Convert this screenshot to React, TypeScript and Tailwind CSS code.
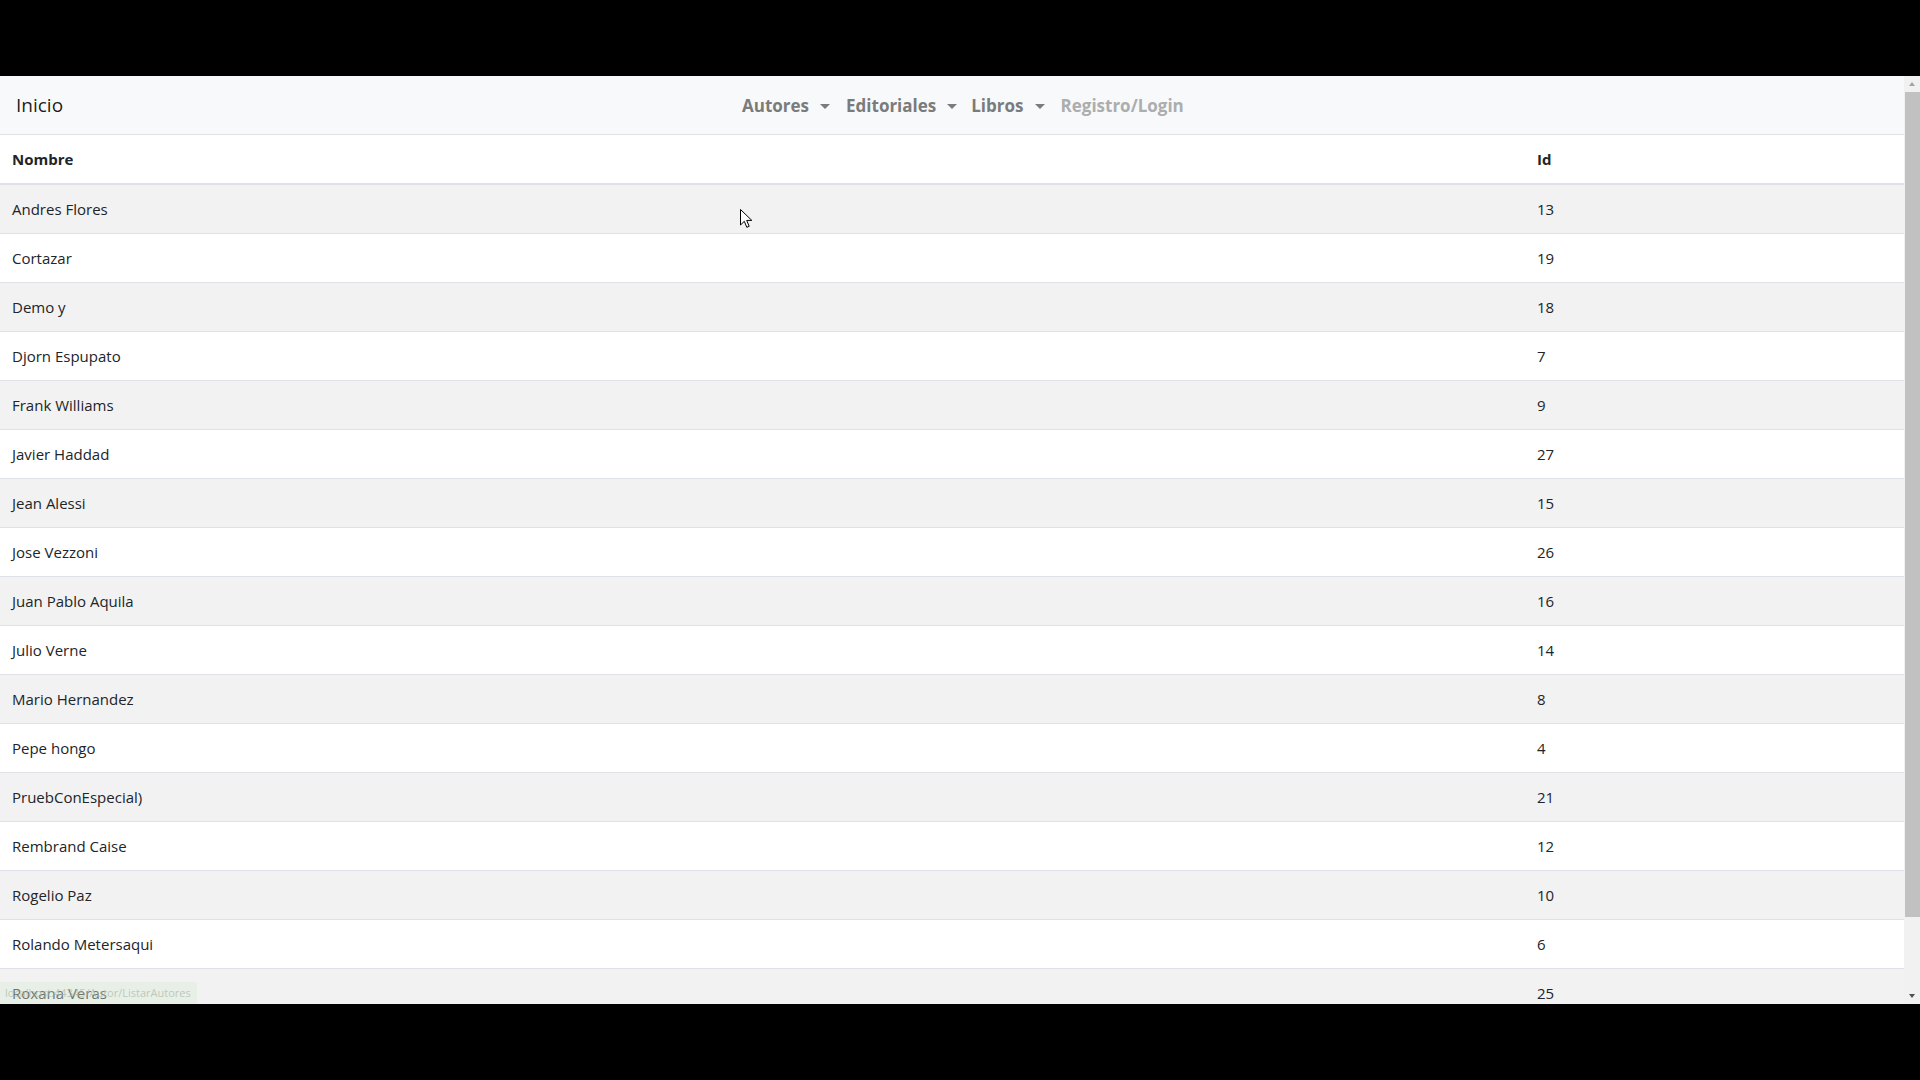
import React from 'react';

const autores = [
  { nombre: 'Andres Flores', id: 13 },
  { nombre: 'Cortazar', id: 19 },
  { nombre: 'Demo y', id: 18 },
  { nombre: 'Djorn Espupato', id: 7 },
  { nombre: 'Frank Williams', id: 9 },
  { nombre: 'Javier Haddad', id: 27 },
  { nombre: 'Jean Alessi', id: 15 },
  { nombre: 'Jose Vezzoni', id: 26 },
  { nombre: 'Juan Pablo Aquila', id: 16 },
  { nombre: 'Julio Verne', id: 14 },
  { nombre: 'Mario Hernandez', id: 8 },
  { nombre: 'Pepe hongo', id: 4 },
  { nombre: 'PruebConEspecial)', id: 21 },
  { nombre: 'Rembrand Caise', id: 12 },
  { nombre: 'Rogelio Paz', id: 10 },
  { nombre: 'Rolando Metersaqui', id: 6 },
  { nombre: 'Roxana Veras', id: 25 },
];

function Caret() {
  return (
    <span className="ml-[11px] inline-block w-0 h-0 border-l-[5px] border-r-[5px] border-t-[5px] border-l-transparent border-r-transparent border-t-current translate-y-[1px]" />
  );
}

function NavDropdown({ label, className }: { label: string; className?: string }) {
  return (
    <a className={`flex items-center text-[#7a7b7c] ${className ?? ''}`}>
      <span>{label}</span>
      <Caret />
    </a>
  );
}

function Scrollbar() {
  return (
    <div className="w-[16px] h-full bg-[#f1f1f1] flex flex-col">
      <div className="h-[16px] flex items-center justify-center">
        <span className="w-0 h-0 border-l-[3.5px] border-r-[3.5px] border-b-[4px] border-l-transparent border-r-transparent border-b-[#a3a3a3]" />
      </div>
      <div className="h-[825px] pl-[1px]">
        <div className="h-full w-full bg-[#c1c1c1]" />
      </div>
      <div className="flex-1" />
      <div className="h-[16px] flex items-center justify-center">
        <span className="w-0 h-0 border-l-[3.5px] border-r-[3.5px] border-t-[4px] border-l-transparent border-r-transparent border-t-[#505050]" />
      </div>
    </div>
  );
}

export default function App() {
  return (
    <div className="w-full h-screen bg-black flex flex-col font-['Open_Sans',sans-serif] text-[#212529]">
      <div className="h-[76px] shrink-0" />
      <div className="h-[928px] shrink-0 flex relative overflow-hidden bg-white">
        <div className="flex-1 overflow-hidden">
          {/* Navbar */}
          <nav className="h-[58px] bg-[#f8f9fa] flex items-center pl-4">
            <div className="w-[726px] text-[19px] text-black/90 leading-none">Inicio</div>
            <div className="flex items-center text-[17px] font-bold leading-none">
              <NavDropdown label="Autores" />
              <NavDropdown label="Editoriales" className="ml-[16px]" />
              <NavDropdown label="Libros" className="ml-[14px]" />
              <a className="ml-[16px] text-[#acadae]">Registro/Login</a>
            </div>
          </nav>

          {/* Tabla */}
          <div className="text-[15px]">
            <div className="flex h-[51px] border-t border-b-2 border-[#dee2e6] font-bold items-center">
              <div className="w-[1525px] pl-3">Nombre</div>
              <div className="pl-3">Id</div>
            </div>
            {autores.map((a, i) => (
              <div
                key={a.id}
                className={`flex items-center ${i === 0 ? 'h-[48px]' : 'h-[49px] border-t border-[#dee2e6]'} ${i % 2 === 0 ? 'bg-[#f2f2f2]' : 'bg-white'}`}
              >
                <div className="w-[1525px] pl-3">{a.nombre}</div>
                <div className="pl-3">{a.id}</div>
              </div>
            ))}
          </div>
        </div>
        <Scrollbar />

        {/* cursor */}
        <svg className="absolute left-[740px] top-[133px]" width="13" height="20" viewBox="0 0 13 20">
          <path d="M0.5 0.5 L0.5 16 L4.3 12.3 L6.8 18.3 L9.2 17.3 L6.7 11.4 L11.8 11.4 Z" fill="#fff" stroke="#000" strokeWidth="1" strokeLinejoin="miter" />
        </svg>

        {/* link de estado del navegador */}
        <div className="absolute left-0 bottom-0 h-[22px] w-[197px] bg-[#d8ead5]/40 rounded-tr-[3px] flex items-center pl-[5px] text-[11px] text-[#aab5a8]/70 whitespace-nowrap">
          localhost:44345/Autor/ListarAutores
        </div>
      </div>
    </div>
  );
}
